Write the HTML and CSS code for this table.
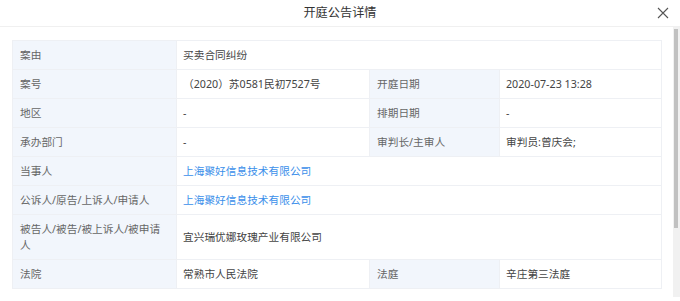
FILE: index.html
```html
<!DOCTYPE html>
<html lang="zh-CN">
<head>
<meta charset="utf-8">
<title>开庭公告详情</title>
<link rel="stylesheet" href="styles.css">
</head>
<body>
<div class="dialog">
  <div class="dialog-header">
    <span class="dialog-title">开庭公告详情</span>
    <button class="dialog-close" aria-label="关闭">
      <svg width="12" height="12" viewBox="0 0 12 12"><path d="M1 1L11 11M11 1L1 11" stroke="#555" stroke-width="1.1" fill="none"/></svg>
    </button>
  </div>
  <div class="dialog-main">
    <div class="dialog-body">
      <table class="detail">
        <colgroup>
          <col class="c1"><col class="c2"><col class="c3"><col class="c4">
        </colgroup>
        <tr><th>案由</th><td colspan="3">买卖合同纠纷</td></tr>
        <tr><th>案号</th><td>（2020）苏0581民初7527号</td><th>开庭日期</th><td>2020-07-23 13:28</td></tr>
        <tr><th>地区</th><td>-</td><th>排期日期</th><td>-</td></tr>
        <tr><th>承办部门</th><td>-</td><th>审判长/主审人</th><td>审判员:曾庆会;</td></tr>
        <tr><th>当事人</th><td colspan="3"><a class="link" href="#">上海聚好信息技术有限公司</a></td></tr>
        <tr><th>公诉人/原告/上诉人/申请人</th><td colspan="3"><a class="link" href="#">上海聚好信息技术有限公司</a></td></tr>
        <tr><th>被告人/被告/被上诉人/被申请人</th><td colspan="3">宜兴瑞优娜玫瑰产业有限公司</td></tr>
        <tr><th>法院</th><td>常熟市人民法院</td><th>法庭</th><td>辛庄第三法庭</td></tr>
      </table>
    </div>
    <div class="scrollbar"><div class="scrollbar-thumb"></div></div>
  </div>
</div>
</body>
</html>
```
FILE: styles.css
```css
html, body {
  margin: 0;
  padding: 0;
  background: #fff;
  overflow: hidden;
}
body {
  font-family: "Noto Sans", "Noto Sans CJK SC", sans-serif;
  color: #333;
}
.dialog {
  width: 680px;
  height: 301px;
  display: flex;
  flex-direction: column;
}
.dialog-header {
  height: 26px;
  flex: none;
  border-bottom: 1px solid #f0f0f0;
  display: flex;
  align-items: center;
  justify-content: center;
  position: relative;
}
.dialog-title {
  font-size: 12.2px;
  color: #333;
  line-height: 16px;
}
.dialog-close {
  position: absolute;
  right: 11px;
  top: 7px;
  width: 12px;
  height: 12px;
  padding: 0;
  border: 0;
  background: transparent;
  display: flex;
}
.dialog-main {
  display: flex;
  height: 270px;
  flex: none;
}
.dialog-body {
  flex: 1;
  overflow: hidden;
  padding: 13px 12px 0 12px;
}
.scrollbar {
  width: 7px;
  flex: none;
  background: #f1f1f1;
  padding: 2px 2px 0 1px;
  box-sizing: border-box;
}
.scrollbar-thumb {
  height: 199px;
  background: #c1c1c1;
}
.detail {
  width: 649px;
  border-collapse: collapse;
  table-layout: fixed;
  font-size: 10.7px;
  line-height: 16px;
}
.c1 { width: 164px; }
.c2 { width: 193px; }
.c3 { width: 130px; }
.c4 { width: 162px; }
.detail th,
.detail td {
  border: 1px solid #eef0f4;
  padding: 6px 6px;
  text-align: left;
  vertical-align: middle;
  font-weight: normal;
}
.detail th {
  background: #f2f6fc;
  color: #666;
  padding-left: 7px;
}
.detail td {
  color: #444;
  padding-left: 6px;
}
.link {
  color: #3b8fea;
  text-decoration: none;
}
```
